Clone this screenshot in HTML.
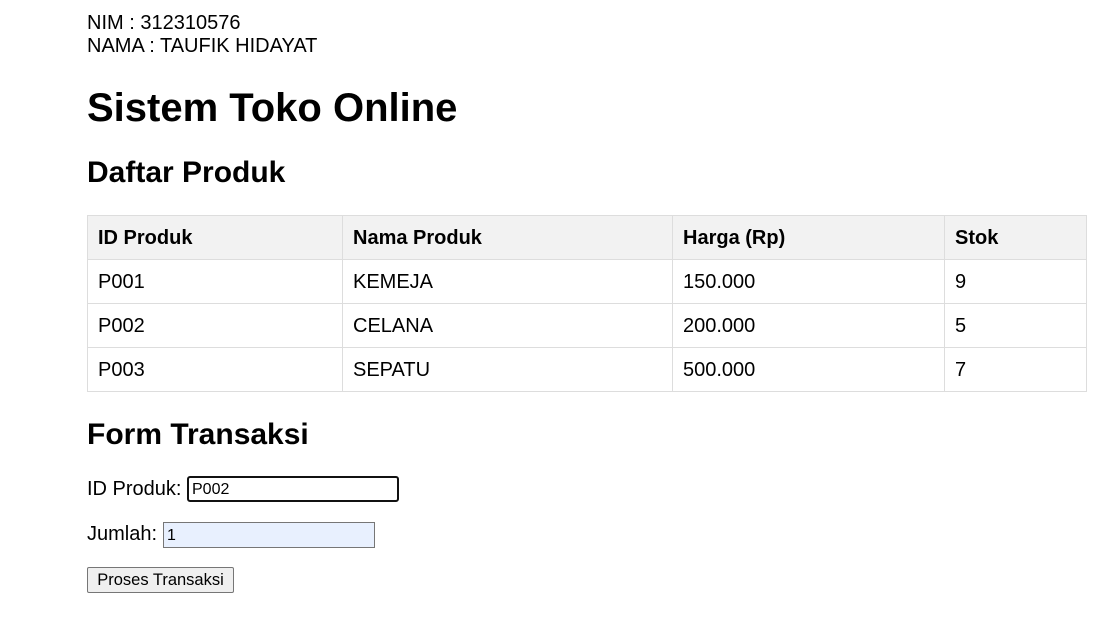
<!DOCTYPE html>
<html><head><style>
body{margin:0;width:1107px;height:621px;background:#fff;font-family:"Liberation Sans",Arial,sans-serif;color:#000;position:relative;overflow:hidden}
.a{position:absolute;left:87px;white-space:nowrap}
.t{font-size:20px;line-height:20px}
table{position:absolute;left:87px;top:215px;width:1000px;border-collapse:collapse;font-size:20px}
td,th{border:1px solid #ddd;height:44px;padding:2px 0 0 10px;text-align:left;box-sizing:border-box}
th{background:#f2f2f2;font-weight:bold}
input{position:absolute;box-sizing:border-box;font-family:"Liberation Sans",Arial,sans-serif;font-size:16px;padding:3px 3px 1px;margin:0}
</style></head><body>
<div class="a t" style="top:13px">NIM : 312310576</div>
<div class="a t" style="top:36px">NAMA : TAUFIK HIDAYAT</div>
<div class="a" style="top:88px;font-size:40px;line-height:40px;font-weight:bold">Sistem Toko Online</div>
<div class="a" style="top:158px;font-size:30px;line-height:30px;font-weight:bold">Daftar Produk</div>
<table>
<tr><th style="width:255px">ID Produk</th><th style="width:330px">Nama Produk</th><th style="width:272px">Harga (Rp)</th><th>Stok</th></tr>
<tr><td>P001</td><td>KEMEJA</td><td>150.000</td><td>9</td></tr>
<tr><td>P002</td><td>CELANA</td><td>200.000</td><td>5</td></tr>
<tr><td>P003</td><td>SEPATU</td><td>500.000</td><td>7</td></tr>
</table>
<div class="a" style="top:420px;font-size:30px;line-height:30px;font-weight:bold">Form Transaksi</div>
<div class="a t" style="top:479px">ID Produk:</div>
<input style="left:187px;top:476px;width:212px;height:26px;border:2px solid #111;border-radius:3px;background:#fff" value="P002">
<div class="a t" style="top:524px">Jumlah:</div>
<input style="left:163px;top:522px;width:212px;height:26px;border:1px solid #767676;background:#e8f0fe" value="1">
<div style="position:absolute;left:87px;top:567px;width:147px;height:26px;box-sizing:border-box;border:1px solid #767676;border-radius:2px;background:#efefef;font-size:16.5px;line-height:24px;text-align:center;white-space:nowrap">Proses Transaksi</div>
</body></html>
